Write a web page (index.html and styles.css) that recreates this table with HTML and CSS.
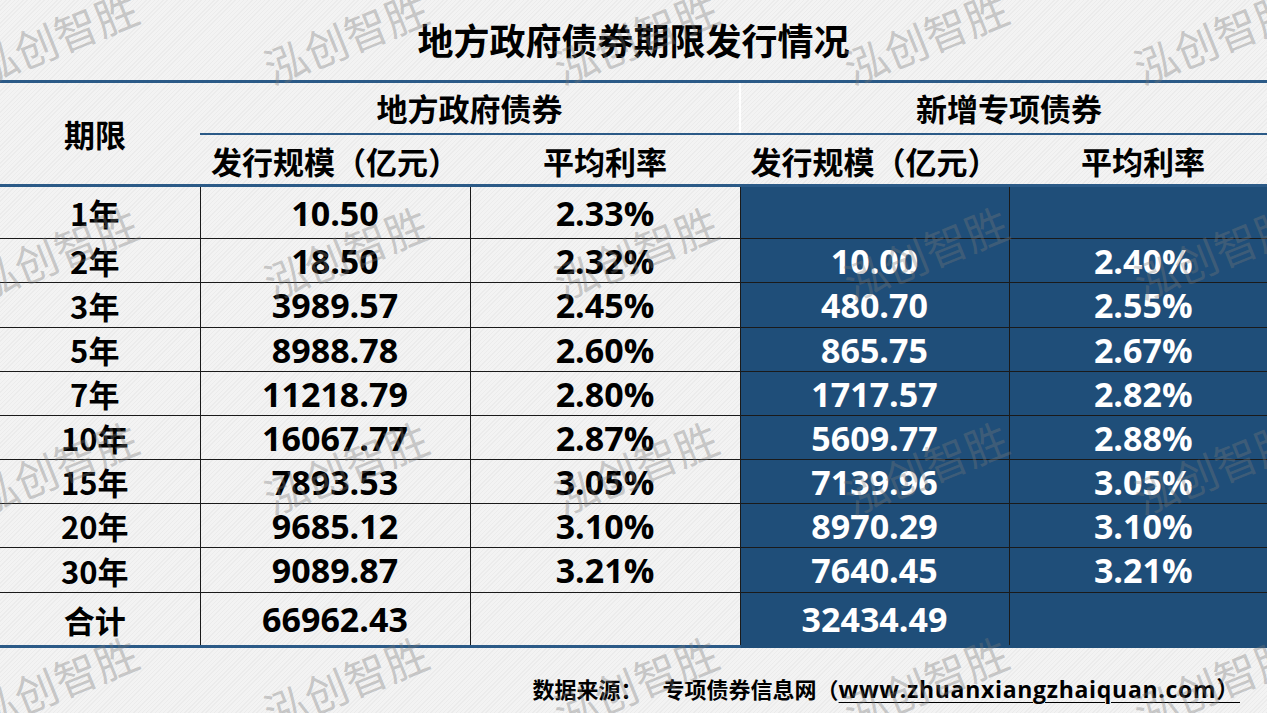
FILE: index.html
```html
<!DOCTYPE html>
<html lang="zh-CN">
<head>
<meta charset="utf-8">
<title>地方政府债券期限发行情况</title>
<link rel="stylesheet" href="styles.css">
</head>
<body>
<div class="page">
  <h1 class="title">地方政府债券期限发行情况</h1>
  <table class="grid">
    <colgroup>
      <col class="c1"><col class="c2"><col class="c3"><col class="c4"><col class="c5">
    </colgroup>
    <thead>
      <tr class="h1">
        <th rowspan="2" class="term-head">期限</th>
        <th colspan="2" class="group">地方政府债券</th>
        <th colspan="2" class="group group-right">新增专项债券</th>
      </tr>
      <tr class="h2">
        <th>发行规模（亿元）</th>
        <th>平均利率</th>
        <th>发行规模（亿元）</th>
        <th>平均利率</th>
      </tr>
    </thead>
    <tbody>
      <tr class="r-tall"><td>1年</td><td>10.50</td><td>2.33%</td><td class="blue"></td><td class="blue"></td></tr>
      <tr class="r"><td>2年</td><td>18.50</td><td>2.32%</td><td class="blue">10.00</td><td class="blue">2.40%</td></tr>
      <tr class="r r45"><td>3年</td><td>3989.57</td><td>2.45%</td><td class="blue">480.70</td><td class="blue">2.55%</td></tr>
      <tr class="r"><td>5年</td><td>8988.78</td><td>2.60%</td><td class="blue">865.75</td><td class="blue">2.67%</td></tr>
      <tr class="r"><td>7年</td><td>11218.79</td><td>2.80%</td><td class="blue">1717.57</td><td class="blue">2.82%</td></tr>
      <tr class="r"><td>10年</td><td>16067.77</td><td>2.87%</td><td class="blue">5609.77</td><td class="blue">2.88%</td></tr>
      <tr class="r"><td>15年</td><td>7893.53</td><td>3.05%</td><td class="blue">7139.96</td><td class="blue">3.05%</td></tr>
      <tr class="r"><td>20年</td><td>9685.12</td><td>3.10%</td><td class="blue">8970.29</td><td class="blue">3.10%</td></tr>
      <tr class="r r45"><td>30年</td><td>9089.87</td><td>3.21%</td><td class="blue">7640.45</td><td class="blue">3.21%</td></tr>
      <tr class="r-total"><td>合计</td><td>66962.43</td><td></td><td class="blue">32434.49</td><td class="blue"></td></tr>
    </tbody>
  </table>
  <p class="source"><span class="source-label">数据来源：</span><span class="site">专项债券信息网（</span><span class="link">www.zhuanxiangzhaiquan.com）</span></p>

  <div class="watermarks" aria-hidden="true">
    <span>泓创智胜</span><span>泓创智胜</span><span>泓创智胜</span><span>泓创智胜</span><span>泓创智胜</span>
    <span>泓创智胜</span><span>泓创智胜</span><span>泓创智胜</span><span>泓创智胜</span><span>泓创智胜</span>
    <span>泓创智胜</span><span>泓创智胜</span><span>泓创智胜</span><span>泓创智胜</span><span>泓创智胜</span>
    <span>泓创智胜</span><span>泓创智胜</span><span>泓创智胜</span><span>泓创智胜</span><span>泓创智胜</span>
  </div>
</div>
</body>
</html>
```

FILE: styles.css
```css
html, body {
  margin: 0;
  padding: 0;
  overflow: hidden;
}

body {
  width: 1267px;
  height: 713px;
  background-color: #f3f3f3;
  background-image: repeating-linear-gradient(-45deg, rgba(0,0,0,0.03) 0 1px, transparent 1px 3px);
  font-family: "Open Sans", "Noto Sans CJK SC", sans-serif;
  color: #000;
}

.page {
  position: relative;
  width: 1267px;
  height: 713px;
  overflow: hidden;
}

.title {
  margin: 0;
  height: 80px;
  display: flex;
  align-items: center;
  justify-content: center;
  font-family: "Noto Sans CJK SC", sans-serif;
  font-size: 36px;
  font-weight: 700;
  line-height: 1;
  padding-bottom: 2px;
  box-sizing: border-box;
}

.grid {
  border-collapse: collapse;
  table-layout: fixed;
  width: 1287px;
  margin-left: -10px;
}

.c1 { width: 210px; }
.c2 { width: 270px; }
.c3 { width: 270px; }
.c4 { width: 269px; }
.c5 { width: 268px; }

.grid th,
.grid td {
  padding: 0;
  text-align: center;
  vertical-align: middle;
  font-weight: 700;
  line-height: 1;
}

.grid th {
  font-family: "Noto Sans CJK SC", sans-serif;
  font-size: 31px;
}

.h1 { height: 52px; }
.h1 th { border-top: 3px solid #2b5a87; }
.group { border-bottom: 2px solid #2b5a87; padding-bottom: 4px; }
.group-right { border-left: 2px solid #ffffff; }

.h2 { height: 52px; }
.h2 th,
.term-head { border-bottom: 3px solid #2b5a87; }
.h2 th { padding-top: 2px; }

.grid td {
  font-size: 34px;
  border-top: 1.5px solid #1a1a1a;
  border-left: 1.5px solid #1a1a1a;
}

.grid td:first-child {
  border-left: none;
  font-family: "Noto Sans CJK SC", sans-serif;
  font-size: 31px;
}

.r-tall { height: 53px; }
.r { height: 44px; }
.r45 { height: 45px; }
.r-total { height: 54px; }
.r-total td { border-bottom: 3px solid #2b5a87; }
.r-total td.blue { border-bottom-color: #1f4e79; }

.grid td.blue {
  background-color: #1f4e79;
  color: #ffffff;
}

.source {
  margin: 0;
  display: flex;
  justify-content: flex-end;
  align-items: baseline;
  padding: 29px 27px 0 0;
  font-size: 22px;
  font-weight: 700;
  line-height: 1;
}

.source-label,
.site {
  font-family: "Noto Sans CJK SC", sans-serif;
}

.source-label {
  margin-right: 20px;
}

.link {
  font-size: 23px;
  letter-spacing: 0.7px;
  text-decoration: underline;
  text-decoration-thickness: 1px;
  text-underline-offset: 4px;
}

.watermarks {
  position: absolute;
  left: -90px;
  top: -72px;
  display: grid;
  grid-template-columns: repeat(5, 290px);
  grid-template-rows: repeat(4, 215px);
  pointer-events: none;
}

.watermarks span {
  display: flex;
  align-items: center;
  justify-content: center;
  font-family: "Noto Sans CJK SC", sans-serif;
  font-weight: 400;
  font-size: 43px;
  color: rgba(120, 120, 120, 0.36);
  transform: rotate(-22deg);
  white-space: nowrap;
}
```
